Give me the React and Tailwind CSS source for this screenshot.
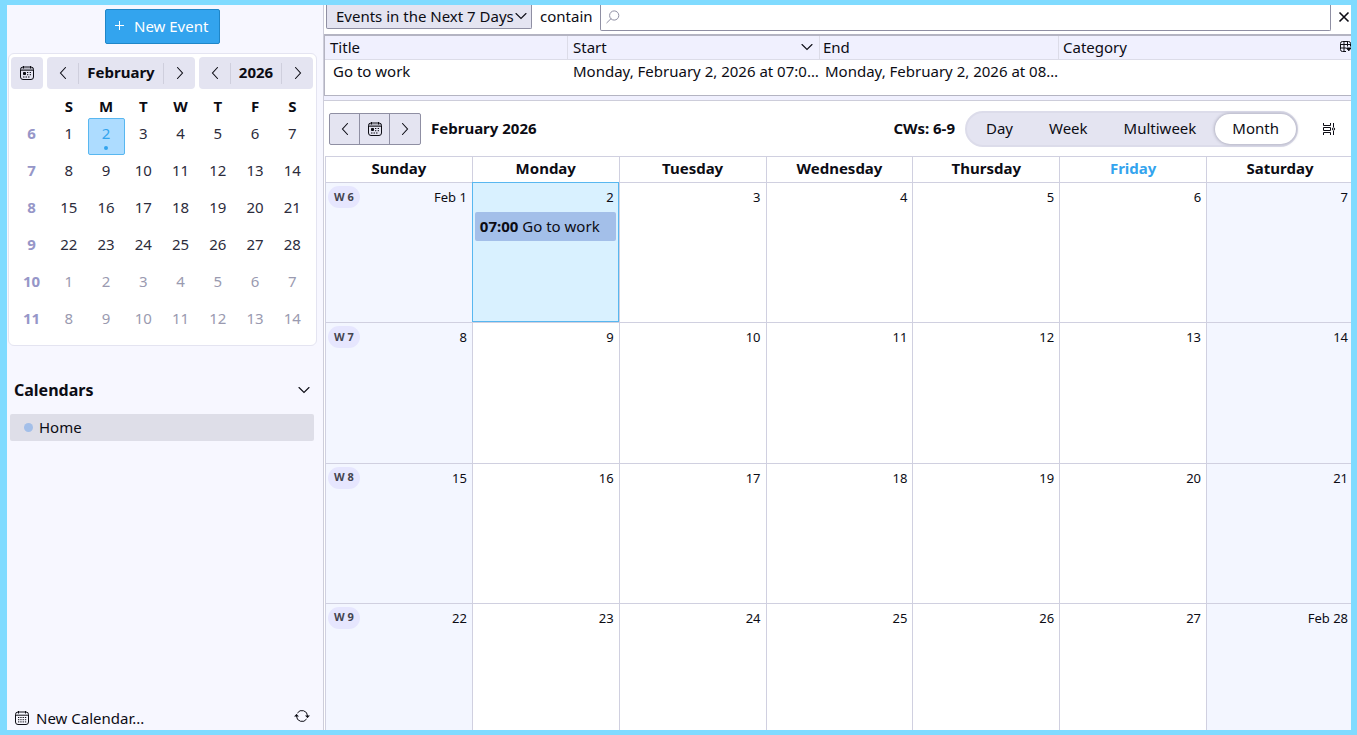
import React, { useState } from 'react';

const WEEKDAYS = ['Sunday', 'Monday', 'Tuesday', 'Wednesday', 'Thursday', 'Friday', 'Saturday'];
const VIEWS = ['Day', 'Week', 'Multiweek', 'Month'];

const miniWeeks = [
  { week: 6, days: [1, 2, 3, 4, 5, 6, 7] },
  { week: 7, days: [8, 9, 10, 11, 12, 13, 14] },
  { week: 8, days: [15, 16, 17, 18, 19, 20, 21] },
  { week: 9, days: [22, 23, 24, 25, 26, 27, 28] },
  { week: 10, days: [1, 2, 3, 4, 5, 6, 7], other: true },
  { week: 11, days: [8, 9, 10, 11, 12, 13, 14], other: true },
];

const monthWeeks = miniWeeks.filter((w) => !w.other);

const events = [
  {
    id: 1,
    title: 'Go to work',
    day: 2,
    time: '07:00',
    start: 'Monday, February 2, 2026 at 07:00:00',
    end: 'Monday, February 2, 2026 at 08:00:00',
    category: '',
  },
];

const dayLabel = (day) => (day === 1 || day === 28 ? `Feb ${day}` : day);

const chevrons = {
  left: 'M9.5 1.5l-5 5.5 5 5.5',
  right: 'M4.5 1.5l5 5.5-5 5.5',
  down: 'M2 4.5l5 5 5-5',
};

const Chevron = ({ dir, className = '' }) => (
  <svg width="14" height="14" viewBox="0 0 14 14" fill="none" stroke="currentColor" strokeWidth="1.1" strokeLinecap="round" className={`shrink-0 ${className}`}>
    <path d={chevrons[dir]} />
  </svg>
);

const TodayIcon = () => (
  <svg width="16" height="16" viewBox="0 0 16 16" fill="none" stroke="currentColor">
    <rect x="1.5" y="2" width="13" height="12.5" rx="2.5" />
    <path d="M1.5 2.8h13v2.2h-13z" fill="currentColor" fillOpacity="0.2" stroke="none" />
    <path d="M1.5 5.2h13M4.5 1v2.5M11.5 1v2.5" />
    <path d="M4.5 7.5h2v2h-2z" fill="currentColor" />
    <path d="M8 7.5h1.3M10.7 7.5H12M8 9.7h1.3M10.7 9.7H12M4 12h1.5M6.5 12H8M9 12h1.5" />
  </svg>
);

const CalendarIcon = () => (
  <svg width="16" height="16" viewBox="0 0 16 16" fill="none" stroke="currentColor">
    <rect x="1.5" y="2" width="13" height="12.5" rx="2.5" />
    <path d="M1.5 5.2h13M4.5 1v2.5M11.5 1v2.5" />
    <path d="M4 7.5h8.5M4 9.7h8.5M4 11.9h8.5" strokeDasharray="1.3 1" />
  </svg>
);

const SearchIcon = () => (
  <svg width="14" height="14" viewBox="0 0 14 14" fill="none" stroke="currentColor" className="shrink-0">
    <circle cx="8.2" cy="5.5" r="4.6" />
    <path d="M4.9 8.8L.8 12.8" strokeLinecap="round" />
  </svg>
);

const SyncIcon = () => (
  <svg width="16" height="16" viewBox="0 0 16 16" fill="none" stroke="currentColor">
    <path d="M3.4 5A5.5 5.5 0 0 1 13.5 8v1.5M12.6 11A5.5 5.5 0 0 1 2.5 8V6.5" />
    <path d="M11 7.5h5L13.5 10zM0 8.5h5L2.5 6z" fill="currentColor" stroke="none" />
  </svg>
);

const DensityIcon = () => (
  <svg width="14" height="14" viewBox="0 0 14 14" fill="none" stroke="currentColor">
    <path d="M1.5 1v2.5h7V1M1.5 5.5h7v3h-7zM1.5 13v-2.5h7V13" />
    <path d="M11.5 1v4M11.5 9v4" />
    <circle cx="11.5" cy="7" r="1.2" />
  </svg>
);

const ColumnsIcon = () => (
  <svg width="11" height="12" viewBox="0 0 11 12" fill="none" stroke="currentColor" className="shrink-0">
    <path d="M6 10.5H2.5a2 2 0 0 1-2-2v-6a2 2 0 0 1 2-2h6a2 2 0 0 1 2 2v3M.5 3.5h10M.5 7H6M4 .5v10M7.5 .5v5" />
    <path d="M6.5 7h4.5L8.8 9.8z" fill="currentColor" />
  </svg>
);

const MiniStepper = ({ label, name, grow }) => (
  <div className={`flex h-8 items-center rounded-sm bg-[#e4e4f1] ${grow ? 'flex-1' : 'w-[114px]'}`}>
    <button aria-label={`Previous ${name}`} className="flex h-[21px] w-8 items-center justify-center border-r border-[#cfcfdd]">
      <Chevron dir="left" />
    </button>
    <span className="flex-1 pb-0.5 text-center font-bold">{label}</span>
    <button aria-label={`Next ${name}`} className="flex h-[21px] w-8 items-center justify-center border-l border-[#cfcfdd]">
      <Chevron dir="right" />
    </button>
  </div>
);

const MiniMonth = () => (
  <div className="mt-[9px] rounded-md border border-[#e4e4f1] bg-white py-[3px] pr-[3px] pl-0.5">
    <div className="flex gap-1">
      <button aria-label="Go to today" className="flex size-8 items-center justify-center rounded-sm bg-[#e4e4f1]">
        <TodayIcon />
      </button>
      <MiniStepper label="February" name="month" grow />
      <MiniStepper label="2026" name="year" />
    </div>

    <div className="px-0.5 pt-1.5 pb-0.5">
      <table className="w-full table-fixed border-separate border-spacing-0 text-center">
        <thead>
          <tr>
            <th className="h-[23px] p-0" aria-label="Week" />
            {WEEKDAYS.map((day) => (
              <th key={day} className="h-[23px] p-0 pb-px font-bold">{day.charAt(0)}</th>
            ))}
          </tr>
        </thead>
        <tbody>
          {miniWeeks.map(({ week, days, other }) => (
            <tr key={week} className={other ? 'text-[#9a9ab0]' : 'text-[#2c2c3c]'}>
              <th className="h-[37px] p-0 pb-2 font-bold text-[#9696c8]">{week}</th>
              {days.map((day) => {
                const selected = day === 2 && !other;
                return (
                  <td
                    key={day}
                    className={`relative h-[37px] p-0 pb-2 ${selected ? 'rounded-xs border border-[#58b7f0] bg-[#addcff] text-[#33a4ee]' : ''}`}
                  >
                    {day}
                    {selected && <span className="absolute inset-x-0 bottom-1 mx-auto size-1 rounded-full bg-[#33a4ee]" />}
                  </td>
                );
              })}
            </tr>
          ))}
        </tbody>
      </table>
    </div>
  </div>
);

const Sidebar = () => (
  <aside className="flex w-[317px] shrink-0 flex-col border-r border-[#cdcdda] bg-[#f7f7ff] pt-1 pr-1.5 pl-px">
    <button className="flex h-[35px] w-[115px] items-center gap-2 self-center rounded-xs border border-[#1f86c8] bg-[#33a4ee] pb-px pl-2 text-white">
      <svg width="12" height="12" viewBox="0 0 12 12" stroke="currentColor">
        <path d="M5.5 1v9M1 5.5h9" />
      </svg>
      New Event
    </button>

    <MiniMonth />

    {/* Calendar list */}
    <div className="mt-8 flex items-center justify-between pr-1.5 pl-1.5">
      <h2 className="text-[16px] leading-6 font-bold">Calendars</h2>
      <button aria-label="Collapse calendars">
        <Chevron dir="down" />
      </button>
    </div>
    <ul className="mt-3 pr-[3px] pl-0.5">
      <li className="flex h-[27px] items-center gap-1.5 rounded-xs bg-[#dedee8] pb-px pl-3.5">
        <span className="size-[9px] rounded-full bg-[#a3bfe9]" />
        Home
      </li>
    </ul>

    <div className="mt-auto flex items-center justify-between pr-[7px] pb-px pl-1.5">
      <button className="flex h-[22px] items-center gap-1.5">
        <CalendarIcon />
        New Calendar...
      </button>
      <button aria-label="Synchronize" className="pb-1">
        <SyncIcon />
      </button>
    </div>
  </aside>
);

const SearchBar = () => (
  <div className="flex h-[29px] items-start bg-white pl-0.5">
    <div className="relative">
      <select
        aria-label="Event range"
        className="h-6 w-[206px] appearance-none rounded-b-xs border border-t-0 border-[#8f8fa3] bg-[#e4e4f1] pb-0.5 pl-[9px] outline-none"
      >
        <option>Events in the Next 7 Days</option>
      </select>
      <Chevron dir="down" className="pointer-events-none absolute top-1 right-1" />
    </div>
    <label htmlFor="event-search" className="pr-[7px] pl-2 leading-[23px]">contain</label>
    <div className="flex h-[26px] flex-1 items-center rounded-b-xs border border-t-0 border-[#8f8fa3] pb-0.5 pl-[5px] text-[#8f8fa3]">
      <SearchIcon />
      <input id="event-search" type="search" className="min-w-0 flex-1 bg-transparent px-1 text-black outline-none" />
    </div>
    <button aria-label="Close" className="ml-[5px] flex h-6 w-[15px] items-center justify-center">
      <svg width="12" height="12" viewBox="0 0 12 12" stroke="currentColor" strokeWidth="1.6">
        <path d="M1.5 1.5l9 9M10.5 1.5l-9 9" />
      </svg>
    </button>
  </div>
);

const EventList = () => (
  <div className="h-[62px] border-t-2 border-b border-l border-[#b4b4c2] bg-white">
    <table className="w-full table-fixed border-separate border-spacing-0 text-left">
      <thead>
        <tr className="bg-[#f0f0fe] *:h-6 *:border-b *:border-[#dcdce8] *:pt-0 *:pb-0.5 *:font-normal">
          <th className="w-[243px] border-r px-[5px]">Title</th>
          <th className="w-[252px] border-r px-[5px]">
            <div className="flex items-center justify-between">
              Start
              <Chevron dir="down" />
            </div>
          </th>
          <th className="w-[239px] border-r px-[3px]">End</th>
          <th className="pr-0 pl-1">
            <div className="flex items-center justify-between">
              Category
              <button aria-label="Select columns">
                <ColumnsIcon />
              </button>
            </div>
          </th>
        </tr>
      </thead>
      <tbody>
        {events.map((event) => (
          <tr key={event.id} className="*:h-6 *:truncate *:pt-0 *:pb-0.5">
            <td className="px-2">{event.title}</td>
            <td className="pr-0 pl-[5px]">{event.start}</td>
            <td className="pr-0 pl-[5px]">{event.end}</td>
            <td className="px-[5px]">{event.category}</td>
          </tr>
        ))}
      </tbody>
    </table>
  </div>
);

const CalendarToolbar = ({ view, setView }) => (
  <div className="flex h-[55px] shrink-0 items-center pr-[15px] pl-[5px]">
    <div className="flex h-8 divide-x divide-[#8f8fa3] rounded-xs border border-[#8f8fa3] bg-[#e4e4f1]">
      <button aria-label="Previous month" className="flex w-[30px] items-center justify-center">
        <Chevron dir="left" />
      </button>
      <button aria-label="Today" className="flex w-[30px] items-center justify-center">
        <TodayIcon />
      </button>
      <button aria-label="Next month" className="flex w-[30px] items-center justify-center">
        <Chevron dir="right" />
      </button>
    </div>
    <h1 className="ml-2.5 pb-px font-bold">February 2026</h1>

    <span className="mr-2.5 ml-auto pb-px font-bold">CWs: 6-9</span>
    <div className="flex h-9 items-center gap-0.5 rounded-full border-2 border-[#dcdcea] bg-[#e4e4f1] pl-0.5">
      {VIEWS.map((name) => (
        <button
          key={name}
          onClick={() => setView(name)}
          className={`h-[30px] rounded-full px-[17px] pb-px ${view === name ? 'bg-white shadow-[0_0_3px_1px_#b4b4c4]' : ''}`}
        >
          {name}
        </button>
      ))}
    </div>
    <button aria-label="Customize view" className="ml-6">
      <DensityIcon />
    </button>
  </div>
);

const MonthView = () => (
  <div className="min-h-0 flex-1 overflow-hidden pl-px">
    <table className="h-[calc(100%+13px)] w-[calc(100%+2px)] table-fixed border-separate border-spacing-0">
      <thead>
        <tr>
          {WEEKDAYS.map((day) => (
            <th
              key={day}
              className={`h-[26px] border-t border-l border-[#d0d0e0] p-0 pb-[3px] font-bold ${day === 'Friday' ? 'text-[#33a4ee]' : ''}`}
            >
              {day}
            </th>
          ))}
        </tr>
      </thead>
      <tbody>
        {monthWeeks.map(({ week, days }) => (
          <tr key={week} className="h-1/4">
            {days.map((day, i) => {
              const selected = day === 2;
              const weekend = i === 0 || i === 6;
              return (
                <td
                  key={day}
                  className={`p-0 align-top ${selected ? 'border border-[#58b7f0] bg-[#d9f1ff]' : 'border-t border-l border-[#d0d0e0]'} ${weekend ? 'bg-[#f3f6ff]' : ''}`}
                >
                  <div className={`flex items-center justify-between pt-0.5 pl-0.5 text-[13px] ${selected ? 'pr-1' : 'pr-[5px]'}`}>
                    {i === 0 && (
                      <span className="flex h-[22px] w-8 items-center justify-center rounded-full bg-[#e6e6fe] pb-px text-[11px] font-bold text-[#44444f]">
                        W {week}
                      </span>
                    )}
                    <span className="ml-auto leading-6">{dayLabel(day)}</span>
                  </div>
                  {events.filter((event) => event.day === day).map((event) => (
                    <div key={event.id} className="mx-0.5 mt-[3px] h-[29px] truncate rounded-xs bg-[#a3bfe9] px-[5px] leading-[29px]">
                      <b>{event.time}</b> {event.title}
                    </div>
                  ))}
                </td>
              );
            })}
          </tr>
        ))}
      </tbody>
    </table>
  </div>
);

const App = () => {
  const [view, setView] = useState('Month');

  return (
    <div className="flex h-screen overflow-hidden border-y-5 border-r-6 border-l-7 border-[#80dbff] bg-[#f7f7ff] font-['Noto_Sans',sans-serif] text-[15px] leading-5 text-[#0c0c14]">
      <Sidebar />
      <main className="flex min-w-0 flex-1 flex-col bg-[#f0f0fe]">
        <SearchBar />
        <EventList />
        <section className="mt-1 flex min-h-0 flex-1 flex-col border-t border-[#cdcdda] bg-white">
          <CalendarToolbar view={view} setView={setView} />
          <MonthView />
        </section>
      </main>
    </div>
  );
};

export default App;
